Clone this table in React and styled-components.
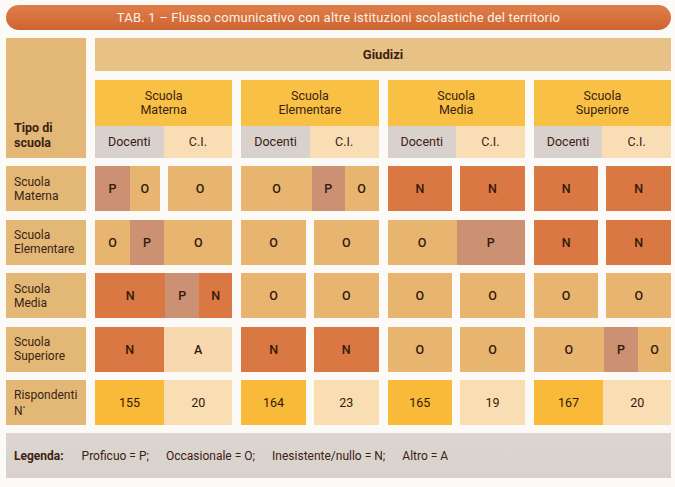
import React from 'react';
import styled, { createGlobalStyle } from 'styled-components';

const GlobalStyle = createGlobalStyle`
  html, body { margin: 0; padding: 0; background: #fcfaf6; }
  body { font-family: Roboto, "Liberation Sans", sans-serif; color: #3a2212; }
`;

const TONES = {
  O: '#e8b571',
  P: '#cc9172',
  N: '#da7843',
  A: '#f8d8ae',
  Y: '#f8ba38',
  L: '#f9ddb3',
};

const Page = styled.div`
  width: 675px;
  height: 487px;
  box-sizing: border-box;
  padding: 5px 4px 0 6px;
  display: flex;
  flex-direction: column;
  gap: 8px;
`;

const TitleBar = styled.div`
  height: 25px;
  border-radius: 13px;
  background: linear-gradient(180deg, #df7d48 0%, #d5703c 60%, #c9642f 100%);
  color: #fcf1e4;
  font-size: 13px;
  display: flex;
  align-items: center;
  justify-content: center;
  letter-spacing: 0.2px;
`;

const Table = styled.div`
  display: grid;
  grid-template-columns: 80px repeat(4, 1fr);
  grid-template-rows: 33px 78px repeat(5, 45px);
  column-gap: 9px;
  row-gap: 8.5px;
`;

const Corner = styled.div`
  grid-row: 1 / span 2;
  grid-column: 1;
  background: #e3b877;
  display: flex;
  align-items: flex-end;
  padding: 0 0 8px 8px;
  font-weight: 700;
  font-size: 12.5px;
  line-height: 15px;
`;

const Giudizi = styled.div`
  grid-row: 1;
  grid-column: 2 / span 4;
  background: #e7c185;
  display: flex;
  align-items: center;
  justify-content: center;
  font-weight: 700;
  font-size: 13px;
`;

const GroupHead = styled.div`
  display: flex;
  flex-direction: column;
`;

const GroupTitle = styled.div`
  height: 46px;
  background: #f8c146;
  display: flex;
  align-items: center;
  justify-content: center;
  text-align: center;
  font-size: 12.5px;
  line-height: 14px;
`;

const SubRow = styled.div`
  flex: 1;
  display: flex;
`;

const SubHead = styled.div`
  flex: 1;
  display: flex;
  align-items: center;
  justify-content: center;
  font-size: 12.5px;
  background: ${(p) => (p.$grey ? '#d9d1cc' : '#f9ddb5')};
`;

const RowLabel = styled.div`
  background: #e3b877;
  display: flex;
  align-items: center;
  padding-left: 8px;
  font-size: 12px;
  line-height: 14px;
`;

const GroupCell = styled.div`
  display: flex;
  gap: 8px;
`;

const Block = styled.div`
  flex: ${(p) => p.$flex};
  display: flex;
`;

const Seg = styled.div`
  flex: ${(p) => p.$flex} 1 0;
  background: ${(p) => TONES[p.$tone]};
  display: flex;
  align-items: center;
  justify-content: center;
  font-size: 12.5px;
  font-weight: ${(p) => (p.$num ? 400 : 500)};
  color: #331a0a;
`;

const Legend = styled.div`
  height: 45px;
  background: linear-gradient(180deg, #dcd5d0 0%, #d8d1cc 100%);
  display: flex;
  align-items: center;
  padding-left: 8px;
  gap: 17px;
  font-size: 12px;
`;

const LegendKey = styled.span`
  font-weight: 700;
  margin-right: 1px;
`;

const Sup = styled.sup`
  font-size: 8px;
  vertical-align: 4px;
`;

const groups = [
  ['Scuola', 'Materna'],
  ['Scuola', 'Elementare'],
  ['Scuola', 'Media'],
  ['Scuola', 'Superiore'],
];

const two = (a, b) => [
  { flex: 1, segs: [[a, a, 1]] },
  { flex: 1, segs: [[b, b, 1]] },
];

const rows = [
  {
    label: ['Scuola', 'Materna'],
    cells: [
      [
        { flex: 1, segs: [['P', 'P', 35], ['O', 'O', 30]] },
        { flex: 1, segs: [['O', 'O', 1]] },
      ],
      [{ flex: 1, segs: [['O', 'O', 71], ['P', 'P', 33], ['O', 'O', 34]] }],
      two('N', 'N'),
      two('N', 'N'),
    ],
  },
  {
    label: ['Scuola', 'Elementare'],
    cells: [
      [{ flex: 1, segs: [['O', 'O', 35], ['P', 'P', 34], ['O', 'O', 68]] }],
      two('O', 'O'),
      [{ flex: 1, segs: [['O', 'O', 69], ['P', 'P', 68]] }],
      two('N', 'N'),
    ],
  },
  {
    label: ['Scuola', 'Media'],
    cells: [
      [{ flex: 1, segs: [['N', 'N', 70], ['P', 'P', 34], ['N', 'N', 33]] }],
      two('O', 'O'),
      two('O', 'O'),
      two('O', 'O'),
    ],
  },
  {
    label: ['Scuola', 'Superiore'],
    cells: [
      [{ flex: 1, segs: [['N', 'N', 69], ['A', 'A', 68]] }],
      two('N', 'N'),
      two('O', 'O'),
      [{ flex: 1, segs: [['O', 'O', 70], ['P', 'P', 34], ['O', 'O', 33]] }],
    ],
  },
  {
    label: ['Rispondenti', 'N°'],
    num: true,
    cells: [
      [{ flex: 1, segs: [['155', 'Y', 69], ['20', 'L', 68]] }],
      [
        { flex: 1, segs: [['164', 'Y', 1]] },
        { flex: 1, segs: [['23', 'L', 1]] },
      ],
      [
        { flex: 1, segs: [['165', 'Y', 1]] },
        { flex: 1, segs: [['19', 'L', 1]] },
      ],
      [{ flex: 1, segs: [['167', 'Y', 69], ['20', 'L', 67]] }],
    ],
  },
];

export default function App() {
  return (
    <>
      <GlobalStyle />
      <Page>
        <TitleBar>TAB. 1 – Flusso comunicativo con altre istituzioni scolastiche del territorio</TitleBar>
        <Table>
          <Corner>
            Tipo di
            <br />
            scuola
          </Corner>
          <Giudizi>Giudizi</Giudizi>
          {groups.map((g) => (
            <GroupHead key={g[1]}>
              <GroupTitle>
                {g[0]}
                <br />
                {g[1]}
              </GroupTitle>
              <SubRow>
                <SubHead $grey>Docenti</SubHead>
                <SubHead>C.I.</SubHead>
              </SubRow>
            </GroupHead>
          ))}
          {rows.map((r) => (
            <React.Fragment key={r.label.join(' ')}>
              <RowLabel>
                <div>
                  {r.label[0]}
                  <br />
                  {r.label[1] === 'N°' ? (
                    <>
                      N<Sup>°</Sup>
                    </>
                  ) : (
                    r.label[1]
                  )}
                </div>
              </RowLabel>
              {r.cells.map((blocks, gi) => (
                <GroupCell key={gi}>
                  {blocks.map((b, bi) => (
                    <Block key={bi} $flex={b.flex}>
                      {b.segs.map(([text, tone, f], si) => (
                        <Seg key={si} $tone={tone} $flex={f} $num={r.num}>
                          {text}
                        </Seg>
                      ))}
                    </Block>
                  ))}
                </GroupCell>
              ))}
            </React.Fragment>
          ))}
        </Table>
        <Legend>
          <LegendKey>Legenda:</LegendKey>
          <span>Proficuo = P;</span>
          <span>Occasionale = O;</span>
          <span>Inesistente/nullo = N;</span>
          <span>Altro = A</span>
        </Legend>
      </Page>
    </>
  );
}
